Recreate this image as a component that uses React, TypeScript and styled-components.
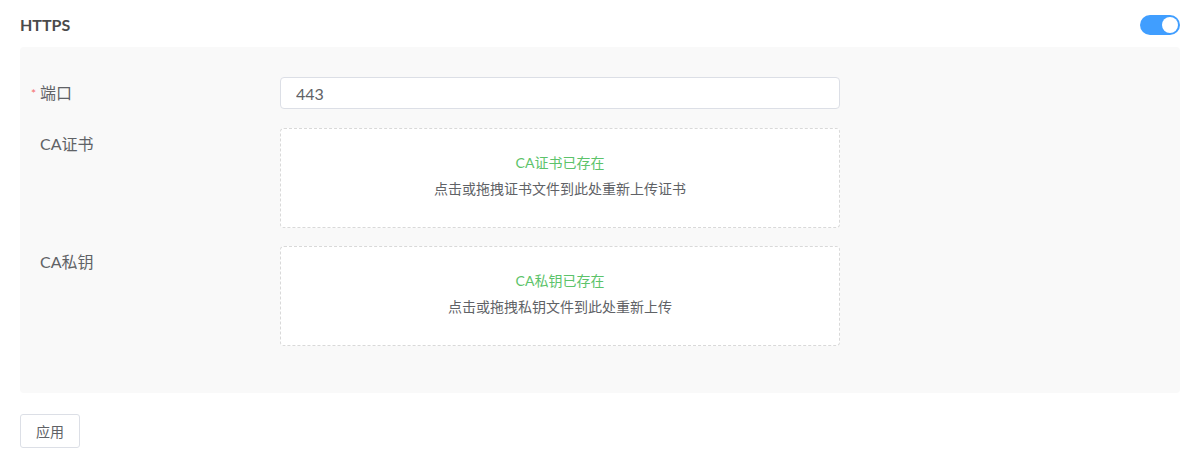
import React, { useState } from 'react';
import styled, { createGlobalStyle } from 'styled-components';

const GlobalStyle = createGlobalStyle`
  body {
    margin: 0;
    background: #ffffff;
    font-family: Lato, 'Noto Sans CJK SC', sans-serif;
  }
`;

const Page = styled.div`
  padding: 0 20px;
  width: 1160px;
`;

const Header = styled.div`
  display: flex;
  align-items: center;
  justify-content: space-between;
  height: 47px;
  padding-top: 2px;
  box-sizing: border-box;
`;

const Title = styled.h3`
  margin: 0;
  font-size: 16px;
  font-weight: 700;
  color: #4a4a4a;
`;

const Switch = styled.button<{ $on: boolean }>`
  position: relative;
  width: 40px;
  height: 20px;
  border: none;
  border-radius: 10px;
  padding: 0;
  cursor: pointer;
  background: ${(p) => (p.$on ? '#409eff' : '#dcdfe6')};

  &::after {
    content: '';
    position: absolute;
    top: 2px;
    left: ${(p) => (p.$on ? '22px' : '2px')};
    width: 16px;
    height: 16px;
    border-radius: 50%;
    background: #fff;
  }
`;

const Panel = styled.div`
  background: #f9f9f9;
  border-radius: 4px;
  padding: 30px 0 29px;
`;

const FormItem = styled.div<{ $gap?: number }>`
  display: flex;
  align-items: flex-start;
  margin-bottom: ${(p) => p.$gap ?? 18}px;
`;

const Label = styled.label<{ $required?: boolean }>`
  width: 260px;
  box-sizing: border-box;
  padding-left: 20px;
  line-height: 32px;
  font-size: 16px;
  color: #606266;
  position: relative;

  &::before {
    content: '*';
    display: ${(p) => (p.$required ? 'inline' : 'none')};
    position: absolute;
    left: 11px;
    top: 1px;
    color: #f56c6c;
    font-size: 12px;
  }
`;

const Input = styled.input`
  width: 560px;
  height: 32px;
  box-sizing: border-box;
  border: 1px solid #dcdfe6;
  border-radius: 4px;
  padding: 0 15px;
  font-family: Lato, 'Noto Sans CJK SC', sans-serif;
  font-size: 16px;
  color: #606266;
  background: #fff;
  outline: none;
`;

const Dropzone = styled.div`
  width: 560px;
  height: 100px;
  box-sizing: border-box;
  border: 1px dashed #d9d9d9;
  border-radius: 4px;
  background: #fff;
  display: flex;
  flex-direction: column;
  align-items: center;
  justify-content: center;
  gap: 6px;
  padding-bottom: 6px;
  cursor: pointer;
`;

const Exists = styled.div`
  font-size: 14px;
  color: #5cc36a;
`;

const Hint = styled.div`
  font-size: 14px;
  color: #606266;
`;

const Footer = styled.div`
  padding-top: 21px;
`;

const Button = styled.button`
  width: 60px;
  height: 34px;
  border: 1px solid #dcdfe6;
  border-radius: 3px;
  background: #fff;
  color: #606266;
  font-family: Lato, 'Noto Sans CJK SC', sans-serif;
  font-size: 14px;
  cursor: pointer;
`;

const App: React.FC = () => {
  const [on, setOn] = useState(true);
  const [port, setPort] = useState('443');

  return (
    <Page>
      <GlobalStyle />
      <Header>
        <Title>HTTPS</Title>
        <Switch $on={on} onClick={() => setOn(!on)} />
      </Header>
      <Panel>
        <FormItem $gap={19}>
          <Label $required>端口</Label>
          <Input value={port} onChange={(e) => setPort(e.target.value)} />
        </FormItem>
        <FormItem>
          <Label>CA证书</Label>
          <Dropzone>
            <Exists>CA证书已存在</Exists>
            <Hint>点击或拖拽证书文件到此处重新上传证书</Hint>
          </Dropzone>
        </FormItem>
        <FormItem>
          <Label>CA私钥</Label>
          <Dropzone>
            <Exists>CA私钥已存在</Exists>
            <Hint>点击或拖拽私钥文件到此处重新上传</Hint>
          </Dropzone>
        </FormItem>
      </Panel>
      <Footer>
        <Button>应用</Button>
      </Footer>
    </Page>
  );
};

export default App;
